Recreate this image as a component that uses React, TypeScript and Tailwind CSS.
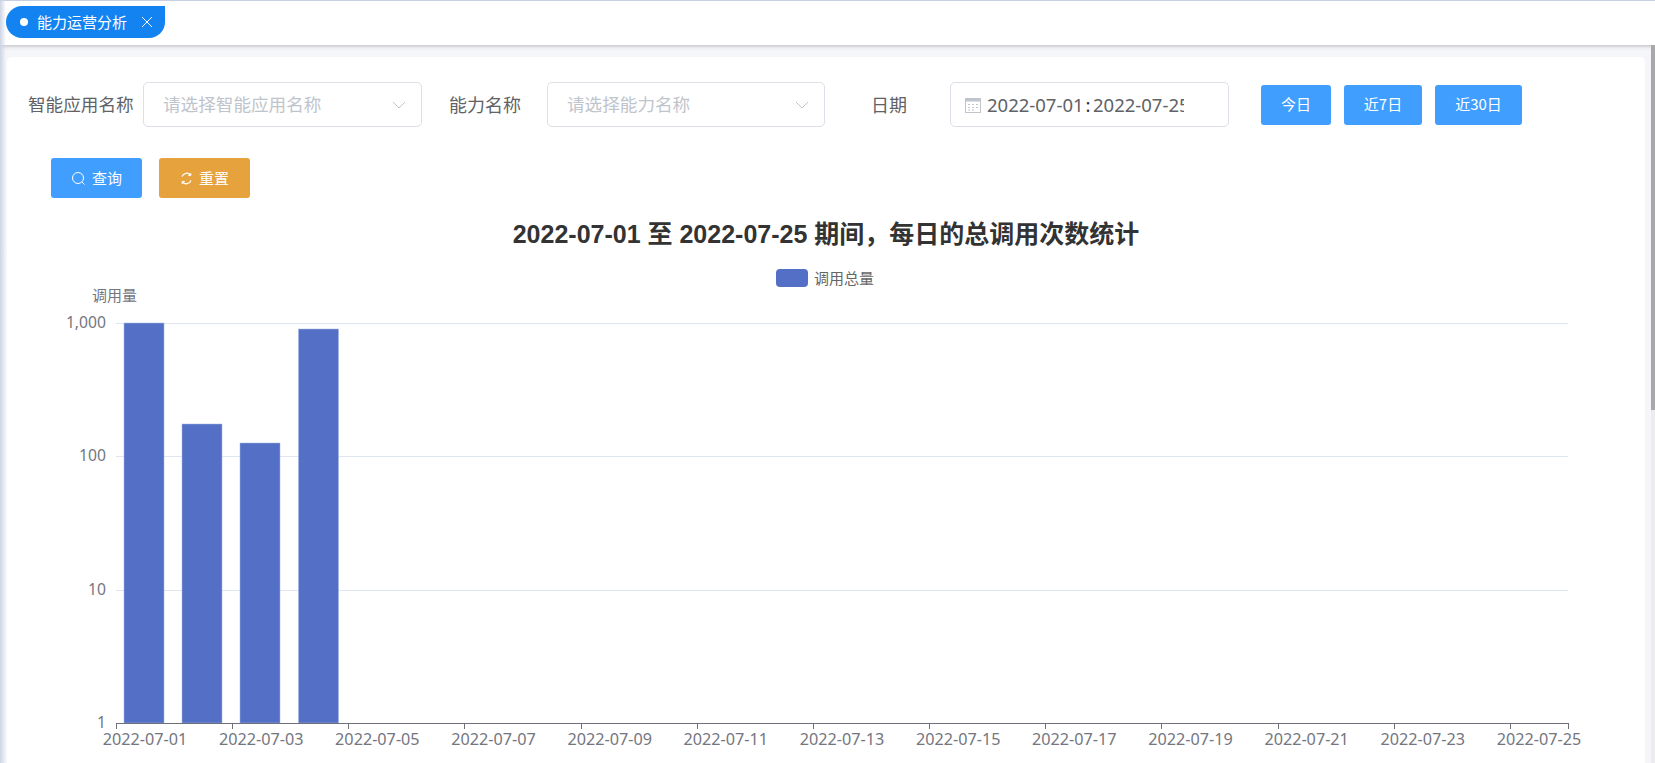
const cjk = "font-['Noto_Sans_CJK_SC','Noto_Sans',sans-serif]";

const AXIS_LEFT = 116;
const AXIS_RIGHT = 1568;
const CAT_W = (AXIS_RIGHT - AXIS_LEFT) / 25;
const Y_BOTTOM = 723;
const LABEL_COLOR = "#74767f";

const bars = [
  { x: 124, top: 323 },
  { x: 182, top: 424 },
  { x: 240, top: 443 },
  { x: 298.5, top: 329 },
];

const yTicks = [
  { label: "1,000", y: 323 },
  { label: "100", y: 456 },
  { label: "10", y: 590 },
  { label: "1", y: 723 },
];

// labels sit in the middle of their category, ticks on its left edge
const dates = Array.from({ length: 13 }, (_, i) => ({
  label: `2022-07-${String(i * 2 + 1).padStart(2, "0")}`,
  tick: AXIS_LEFT + i * 2 * CAT_W,
  center: AXIS_LEFT + (i * 2 + 0.5) * CAT_W,
}));

const Chevron = () => (
  <svg width="14" height="14" viewBox="0 0 14 14" fill="none" className="shrink-0">
    <path d="M1 4l6 6 6-6" stroke="#c0c4cc" strokeWidth="1" />
  </svg>
);

const Select = ({ placeholder, className }: { placeholder: string; className: string }) => (
  <div
    className={`flex h-[45px] items-center justify-between rounded-[5px] border border-[#dcdfe6] bg-white pl-[19px] pr-[15px] ${className}`}
  >
    <span className="text-[17.6px] text-[#c0c4cc]">{placeholder}</span>
    <Chevron />
  </div>
);

const Button = ({ children, className }: { children: React.ReactNode; className: string }) => (
  <button
    className={`flex h-[40px] items-center justify-center rounded-[3px] text-[15px] text-white ${className}`}
  >
    {children}
  </button>
);

const Chart = () => (
  <svg width="1650" height="485" viewBox="0 278 1650 485" className="block font-['Noto_Sans','Noto_Sans_CJK_SC',sans-serif]">
    <text x="92" y="301" fontSize="15" fill={LABEL_COLOR}>调用量</text>
    {yTicks.slice(0, 3).map((t) => (
      <line key={t.y} x1={AXIS_LEFT} x2={AXIS_RIGHT} y1={t.y + 0.5} y2={t.y + 0.5} stroke="#e0e6f1" />
    ))}
    {yTicks.map((t) => (
      <text key={t.label} x="106" y={t.y + 5} textAnchor="end" fontSize="15.7" fill={LABEL_COLOR}>
        {t.label}
      </text>
    ))}
    {bars.map((b) => (
      <rect
        key={b.x}
        x={b.x}
        y={b.top}
        width={40}
        height={Y_BOTTOM - b.top}
        fill="#5470c6"
        stroke="#a5b4e3"
        strokeWidth="0.5"
      />
    ))}
    <line x1={AXIS_LEFT} x2={AXIS_RIGHT} y1={Y_BOTTOM + 0.5} y2={Y_BOTTOM + 0.5} stroke="#6e7079" />
    {dates.map((d) => (
      <line
        key={d.label}
        x1={Math.round(d.tick) + 0.5}
        x2={Math.round(d.tick) + 0.5}
        y1={Y_BOTTOM}
        y2={Y_BOTTOM + 6}
        stroke="#6e7079"
      />
    ))}
    <line x1={AXIS_RIGHT + 0.5} x2={AXIS_RIGHT + 0.5} y1={Y_BOTTOM} y2={Y_BOTTOM + 6} stroke="#6e7079" />
    {dates.map((d) => (
      <text key={d.label} x={d.center} y={745} textAnchor="middle" fontSize="16.2" fill={LABEL_COLOR}>
        {d.label}
      </text>
    ))}
  </svg>
);

export default function App() {
  return (
    <div className={`relative flex h-[763px] w-full flex-col overflow-hidden bg-[#f5f6fa] ${cjk}`}>
      {/* tab strip */}
      <div className="h-[45px] shrink-0 border-t border-[#c5d0e3] bg-white pl-[6px] pt-[5px] shadow-[0_1px_4px_rgba(0,0,0,0.25)]">
        <div className="flex h-[32px] w-[159px] items-center rounded-l-[16px] rounded-br-[16px] bg-[#1283f0] pl-[14px] text-[15px] text-white">
          <span className="h-[8px] w-[8px] rounded-full bg-white" />
          <span className="ml-[9px]">能力运营分析</span>
          <svg width="12" height="12" viewBox="0 0 12 12" fill="none" className="ml-[14px]">
            <path d="M1 1l10 10M11 1L1 11" stroke="white" strokeWidth="1" />
          </svg>
        </div>
      </div>

      {/* page body */}
      <div className="flex min-h-0 flex-1 pl-[7px] pr-[10px] pt-[12px]">
        <div className="min-w-0 flex-1 rounded-t-[5px] bg-white">
          <div className="flex items-center pt-[25px]">
            <span className="ml-[21px] w-[106px] whitespace-nowrap text-[17.6px] text-[#606266]">智能应用名称</span>
            <Select placeholder="请选择智能应用名称" className="ml-[9px] w-[279px]" />
            <span className="ml-[27px] w-[72px] whitespace-nowrap text-[18px] text-[#606266]">能力名称</span>
            <Select placeholder="请选择能力名称" className="ml-[26px] w-[278px]" />
            <span className="ml-[46px] w-[36px] whitespace-nowrap text-[18px] text-[#606266]">日期</span>
            <div className="ml-[43px] flex h-[45px] w-[279px] items-center rounded-[5px] border border-[#dcdfe6] pl-[14px]">
              <svg width="16" height="16" viewBox="0 0 16 16" fill="none" className="shrink-0">
                <rect x="0.5" y="1.5" width="15" height="14" stroke="#c0c4cc" />
                <rect x="0.5" y="1.5" width="15" height="3" fill="#c0c4cc" />
                <path d="M3 7.5h2M7 7.5h2M11 7.5h2M3 10.5h2M7 10.5h2M11 10.5h2M3 13h2M7 13h2" stroke="#c0c4cc" />
              </svg>
              {/* both date inputs clip their value, as in the real range picker */}
              <span className="ml-[6px] w-[93px] shrink-0 overflow-hidden whitespace-nowrap font-['Noto_Sans',sans-serif] text-[18.5px] text-[#606266]">
                2022-07-01
              </span>
              <span className="w-[13px] shrink-0 pl-[3px] text-center text-[18px] text-[#303133]">:</span>
              <span className="w-[91px] shrink-0 overflow-hidden whitespace-nowrap font-['Noto_Sans',sans-serif] text-[18.5px] text-[#606266]">
                2022-07-25
              </span>
            </div>
            <Button className="ml-[32px] w-[70px] bg-[#409eff]">今日</Button>
            <Button className="ml-[13px] w-[78px] bg-[#409eff]">近7日</Button>
            <Button className="ml-[13px] w-[87px] bg-[#409eff]">近30日</Button>
          </div>

          <div className="ml-[44px] mt-[31px] flex gap-[17px]">
            <Button className="w-[91px] gap-[6px] bg-[#409eff]">
              <svg width="15" height="15" viewBox="0 0 15 15" fill="none">
                <circle cx="7" cy="7" r="5.5" stroke="white" />
                <path d="M11 11l2.5 2.5" stroke="white" />
              </svg>
              查询
            </Button>
            <Button className="w-[91px] gap-[6px] bg-[#e6a23c]">
              <svg width="13" height="13" viewBox="0 0 13 13" fill="none">
                <path d="M2 4.5A5 5 0 0 1 10.5 3M11 8.5A5 5 0 0 1 2.5 10" stroke="white" strokeWidth="1.2" />
                <path d="M10.8 1v2.6H8.2M2.2 12V9.4h2.6" stroke="white" strokeWidth="1" />
              </svg>
              重置
            </Button>
          </div>

          <h1 className="mt-[18px] text-center font-['Liberation_Sans','Noto_Sans_CJK_SC',sans-serif] text-[25px] leading-[36px] font-bold text-[#333]">
            2022-07-01 至 2022-07-25 期间，每日的总调用次数统计
          </h1>

          <div className="mt-[16px] flex h-[20px] items-center pl-[769px]">
            <span className="h-[18px] w-[32px] rounded-[4px] bg-[#5470c6]" />
            <span className="ml-[6px] text-[15px] text-[#666]">调用总量</span>
          </div>

          <div className="-ml-[7px] -mt-[10px]">
            <Chart />
          </div>
        </div>
      </div>

      {/* window edge shading */}
      <div className="absolute bottom-0 left-0 top-0 w-[6px] bg-gradient-to-r from-[#ccd4e4] to-transparent" />

      {/* page scrollbar */}
      <div className="absolute bottom-0 right-0 top-[45px] w-[4px] bg-[#ececec]">
        <div className="h-[365px] w-full bg-[#a8a8a8]" />
      </div>
    </div>
  );
}
